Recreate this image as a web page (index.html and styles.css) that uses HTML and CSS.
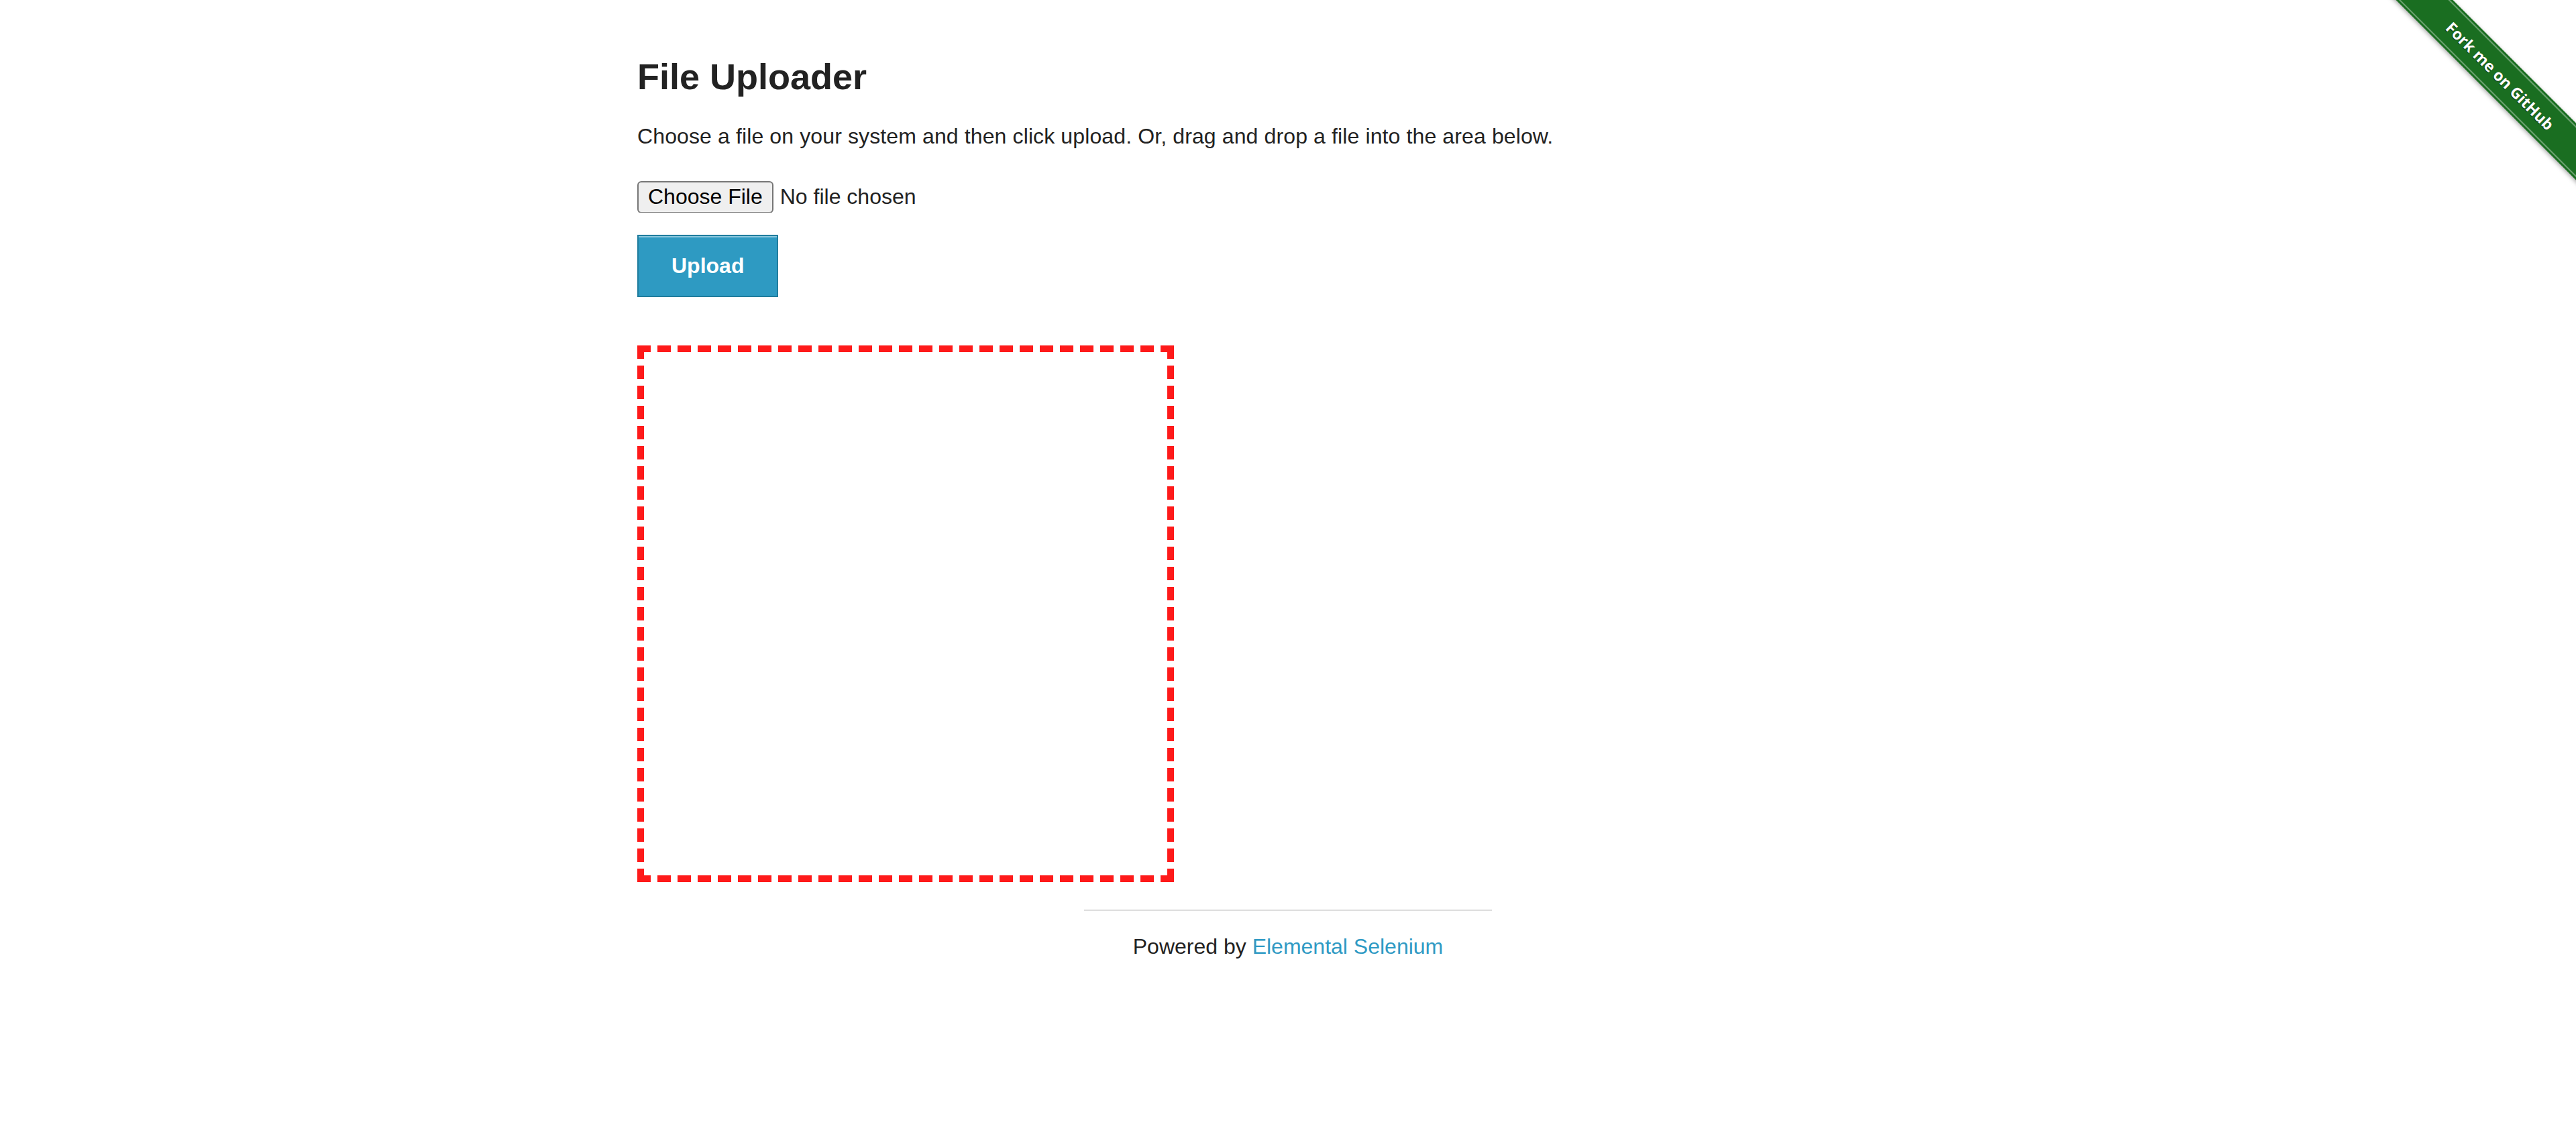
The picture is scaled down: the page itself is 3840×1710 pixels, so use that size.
FILE: index.html
```html
<!DOCTYPE html>
<html lang="en">
<head>
<meta charset="utf-8">
<title>The Internet</title>
<link rel="stylesheet" href="styles.css">
</head>
<body>
<a class="ribbon" href="#"><span class="ribbon-band">Fork me on GitHub</span></a>
<div class="page">
  <main class="row">
    <div class="columns example">
      <h3 class="title">File Uploader</h3>
      <p class="lead">Choose a file on your system and then click upload. Or, drag and drop a file into the area below.</p>
      <form class="upload-form">
        <input class="file-input" type="file" name="file">
        <input class="button" type="submit" value="Upload">
      </form>
      <div class="drop-zone"></div>
    </div>
  </main>
  <footer class="footer">
    <hr class="footer-rule">
    <div class="footer-text">Powered by <a class="footer-link" href="#">Elemental Selenium</a></div>
  </footer>
</div>
</body>
</html>
```

FILE: styles.css
```css
html, body {
  margin: 0;
  padding: 0;
  background: #ffffff;
}

body {
  font-family: "Liberation Sans", Arial, sans-serif;
  color: #222222;
  font-size: 32px;
}

.page {
  display: flex;
  flex-direction: column;
}

.row {
  width: 2000px;
  margin: 0 auto;
}

.columns {
  padding: 0 30px;
}

.example {
  display: flex;
  flex-direction: column;
  align-items: flex-start;
}

.title {
  margin: 82px 0 0 0;
  font-size: 54px;
  line-height: 64px;
  font-weight: bold;
  color: #222222;
}

.lead {
  margin: 33px 0 0 0;
  font-size: 32px;
  line-height: 48px;
  letter-spacing: 0.12px;
}

.upload-form {
  display: flex;
  flex-direction: column;
  align-items: flex-start;
  margin-top: 42px;
}

.file-input {
  font-family: "Liberation Sans", Arial, sans-serif;
  font-size: 32px;
  color: #222222;
  width: 600px;
  height: 48px;
  line-height: 48px;
  padding: 0;
  margin: 0;
}

.file-input::file-selector-button {
  font-family: "Liberation Sans", Arial, sans-serif;
  font-size: 32px;
  color: #000000;
  background: #efefef;
  border: 2px solid #767676;
  border-radius: 6px;
  height: 48px;
  padding: 0 14px;
  margin: 0 10px 0 0;
}

.button {
  margin-top: 33px;
  height: 93px;
  padding: 0 49px;
  font-family: "Liberation Sans", Arial, sans-serif;
  font-size: 32px;
  font-weight: bold;
  color: #ffffff;
  background: #2e9ac2;
  border: 2px solid #1f7c9d;
  box-shadow: inset 0 2px 0 rgba(255, 255, 255, 0.45);
  border-radius: 0;
  cursor: pointer;
}

.drop-zone {
  margin-top: 72px;
  box-sizing: border-box;
  width: 800px;
  height: 800px;
  border: 10px dashed #fe1a1a;
}

.footer {
  width: 608px;
  margin: 0 auto;
}

.footer-rule {
  margin: 41px 0 0 0;
  border: 0;
  height: 2px;
  background: #dddddd;
}

.footer-text {
  margin-top: 29px;
  text-align: center;
  font-size: 32px;
  line-height: 48px;
}

.footer-link {
  color: #2f9ac4;
  text-decoration: none;
}

.ribbon {
  position: absolute;
  top: 0;
  right: 0;
  width: 298px;
  height: 298px;
  overflow: hidden;
  text-decoration: none;
}

.ribbon-band {
  position: absolute;
  left: -65px;
  top: 83px;
  width: 500px;
  height: 60px;
  transform: rotate(45deg);
  background: #1a6e21;
  color: #ffffff;
  font-family: "Open Sans", "DejaVu Sans", sans-serif;
  font-weight: 700;
  font-size: 23px;
  line-height: 60px;
  text-align: center;
  text-shadow: 0 1px 1px rgba(0, 0, 0, 0.6);
  box-shadow: 0 2px 6px rgba(0, 0, 0, 0.35);
}

.ribbon-band::before,
.ribbon-band::after {
  content: "";
  position: absolute;
  left: 0;
  right: 0;
  height: 2px;
  background: rgba(255, 255, 255, 0.35);
}

.ribbon-band::before {
  top: 3px;
}

.ribbon-band::after {
  bottom: 3px;
}
```
